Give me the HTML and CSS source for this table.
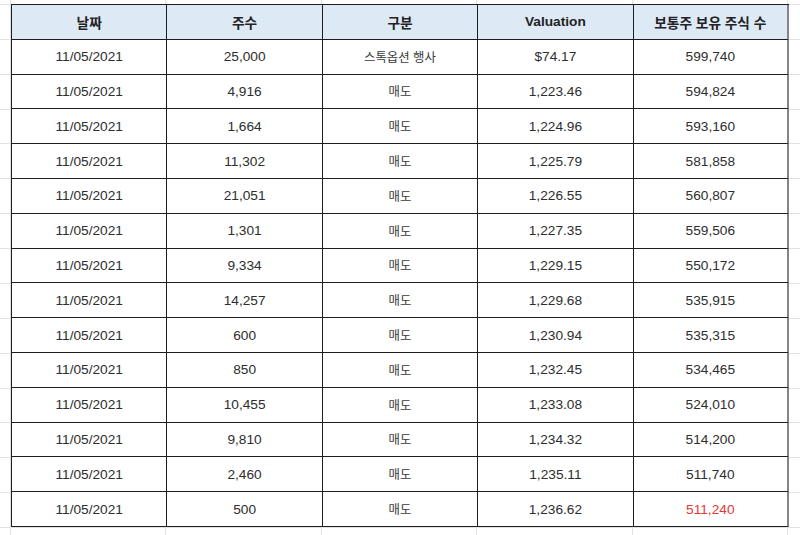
FILE: index.html
```html
<!DOCTYPE html>
<html lang="ko">
<head>
<meta charset="utf-8">
<link rel="stylesheet" href="styles.css">
</head>
<body>
<div class="sheet">
  <div class="grid">
    <div class="cell head">날짜</div><div class="cell head">주수</div><div class="cell head">구분</div><div class="cell head">Valuation</div><div class="cell head last">보통주 보유 주식 수</div>
    <div class="cell">11/05/2021</div><div class="cell">25,000</div><div class="cell ko">스톡옵션 행사</div><div class="cell">$74.17</div><div class="cell last">599,740</div>
    <div class="cell">11/05/2021</div><div class="cell">4,916</div><div class="cell ko">매도</div><div class="cell">1,223.46</div><div class="cell last">594,824</div>
    <div class="cell">11/05/2021</div><div class="cell">1,664</div><div class="cell ko">매도</div><div class="cell">1,224.96</div><div class="cell last">593,160</div>
    <div class="cell">11/05/2021</div><div class="cell">11,302</div><div class="cell ko">매도</div><div class="cell">1,225.79</div><div class="cell last">581,858</div>
    <div class="cell">11/05/2021</div><div class="cell">21,051</div><div class="cell ko">매도</div><div class="cell">1,226.55</div><div class="cell last">560,807</div>
    <div class="cell">11/05/2021</div><div class="cell">1,301</div><div class="cell ko">매도</div><div class="cell">1,227.35</div><div class="cell last">559,506</div>
    <div class="cell">11/05/2021</div><div class="cell">9,334</div><div class="cell ko">매도</div><div class="cell">1,229.15</div><div class="cell last">550,172</div>
    <div class="cell">11/05/2021</div><div class="cell">14,257</div><div class="cell ko">매도</div><div class="cell">1,229.68</div><div class="cell last">535,915</div>
    <div class="cell">11/05/2021</div><div class="cell">600</div><div class="cell ko">매도</div><div class="cell">1,230.94</div><div class="cell last">535,315</div>
    <div class="cell">11/05/2021</div><div class="cell">850</div><div class="cell ko">매도</div><div class="cell">1,232.45</div><div class="cell last">534,465</div>
    <div class="cell">11/05/2021</div><div class="cell">10,455</div><div class="cell ko">매도</div><div class="cell">1,233.08</div><div class="cell last">524,010</div>
    <div class="cell">11/05/2021</div><div class="cell">9,810</div><div class="cell ko">매도</div><div class="cell">1,234.32</div><div class="cell last">514,200</div>
    <div class="cell">11/05/2021</div><div class="cell">2,460</div><div class="cell ko">매도</div><div class="cell">1,235.11</div><div class="cell last">511,740</div>
    <div class="cell">11/05/2021</div><div class="cell">500</div><div class="cell ko">매도</div><div class="cell">1,236.62</div><div class="cell last red">511,240</div>
  </div>
</div>
</body>
</html>
```
FILE: styles.css
```css
html, body {
  margin: 0;
  padding: 0;
  background: #ffffff;
}
.sheet {
  width: 800px;
  height: 535px;
  overflow: hidden;
  box-sizing: border-box;
  padding: 4px 0 0 11px;
  background-color: #ffffff;
  background-image:
    repeating-linear-gradient(to bottom, #e2e2e2 0, #e2e2e2 1px, transparent 1px, transparent 34.87px),
    repeating-linear-gradient(to right, #e2e2e2 0, #e2e2e2 1px, transparent 1px, transparent 155.4px);
  background-position: 0 4px, 10px 0;
  font-family: "Liberation Sans", Arial, "Noto Sans CJK KR", sans-serif;
  font-size: 13.7px;
  color: #2e2e2e;
}
.grid {
  width: 778px;
  height: 523px;
  box-sizing: border-box;
  display: grid;
  grid-template-columns: repeat(5, 1fr);
  grid-template-rows: repeat(15, 1fr);
  border-left: 1px solid #1e1e1e;
  border-top: 1px solid #1e1e1e;
  background: #ffffff;
}
.cell {
  display: flex;
  align-items: center;
  justify-content: center;
  border-right: 1px solid #1e1e1e;
  border-bottom: 1px solid #1e1e1e;
  background: #ffffff;
  white-space: nowrap;
}
.cell.last {
  border-right: 2px solid #858585;
}
.ko {
  font-size: 12.4px;
  color: #3a3a3a;
}
.head {
  background: #dde9f5;
  font-weight: bold;
  color: #222222;
}
.red {
  color: #e53935;
}
```
